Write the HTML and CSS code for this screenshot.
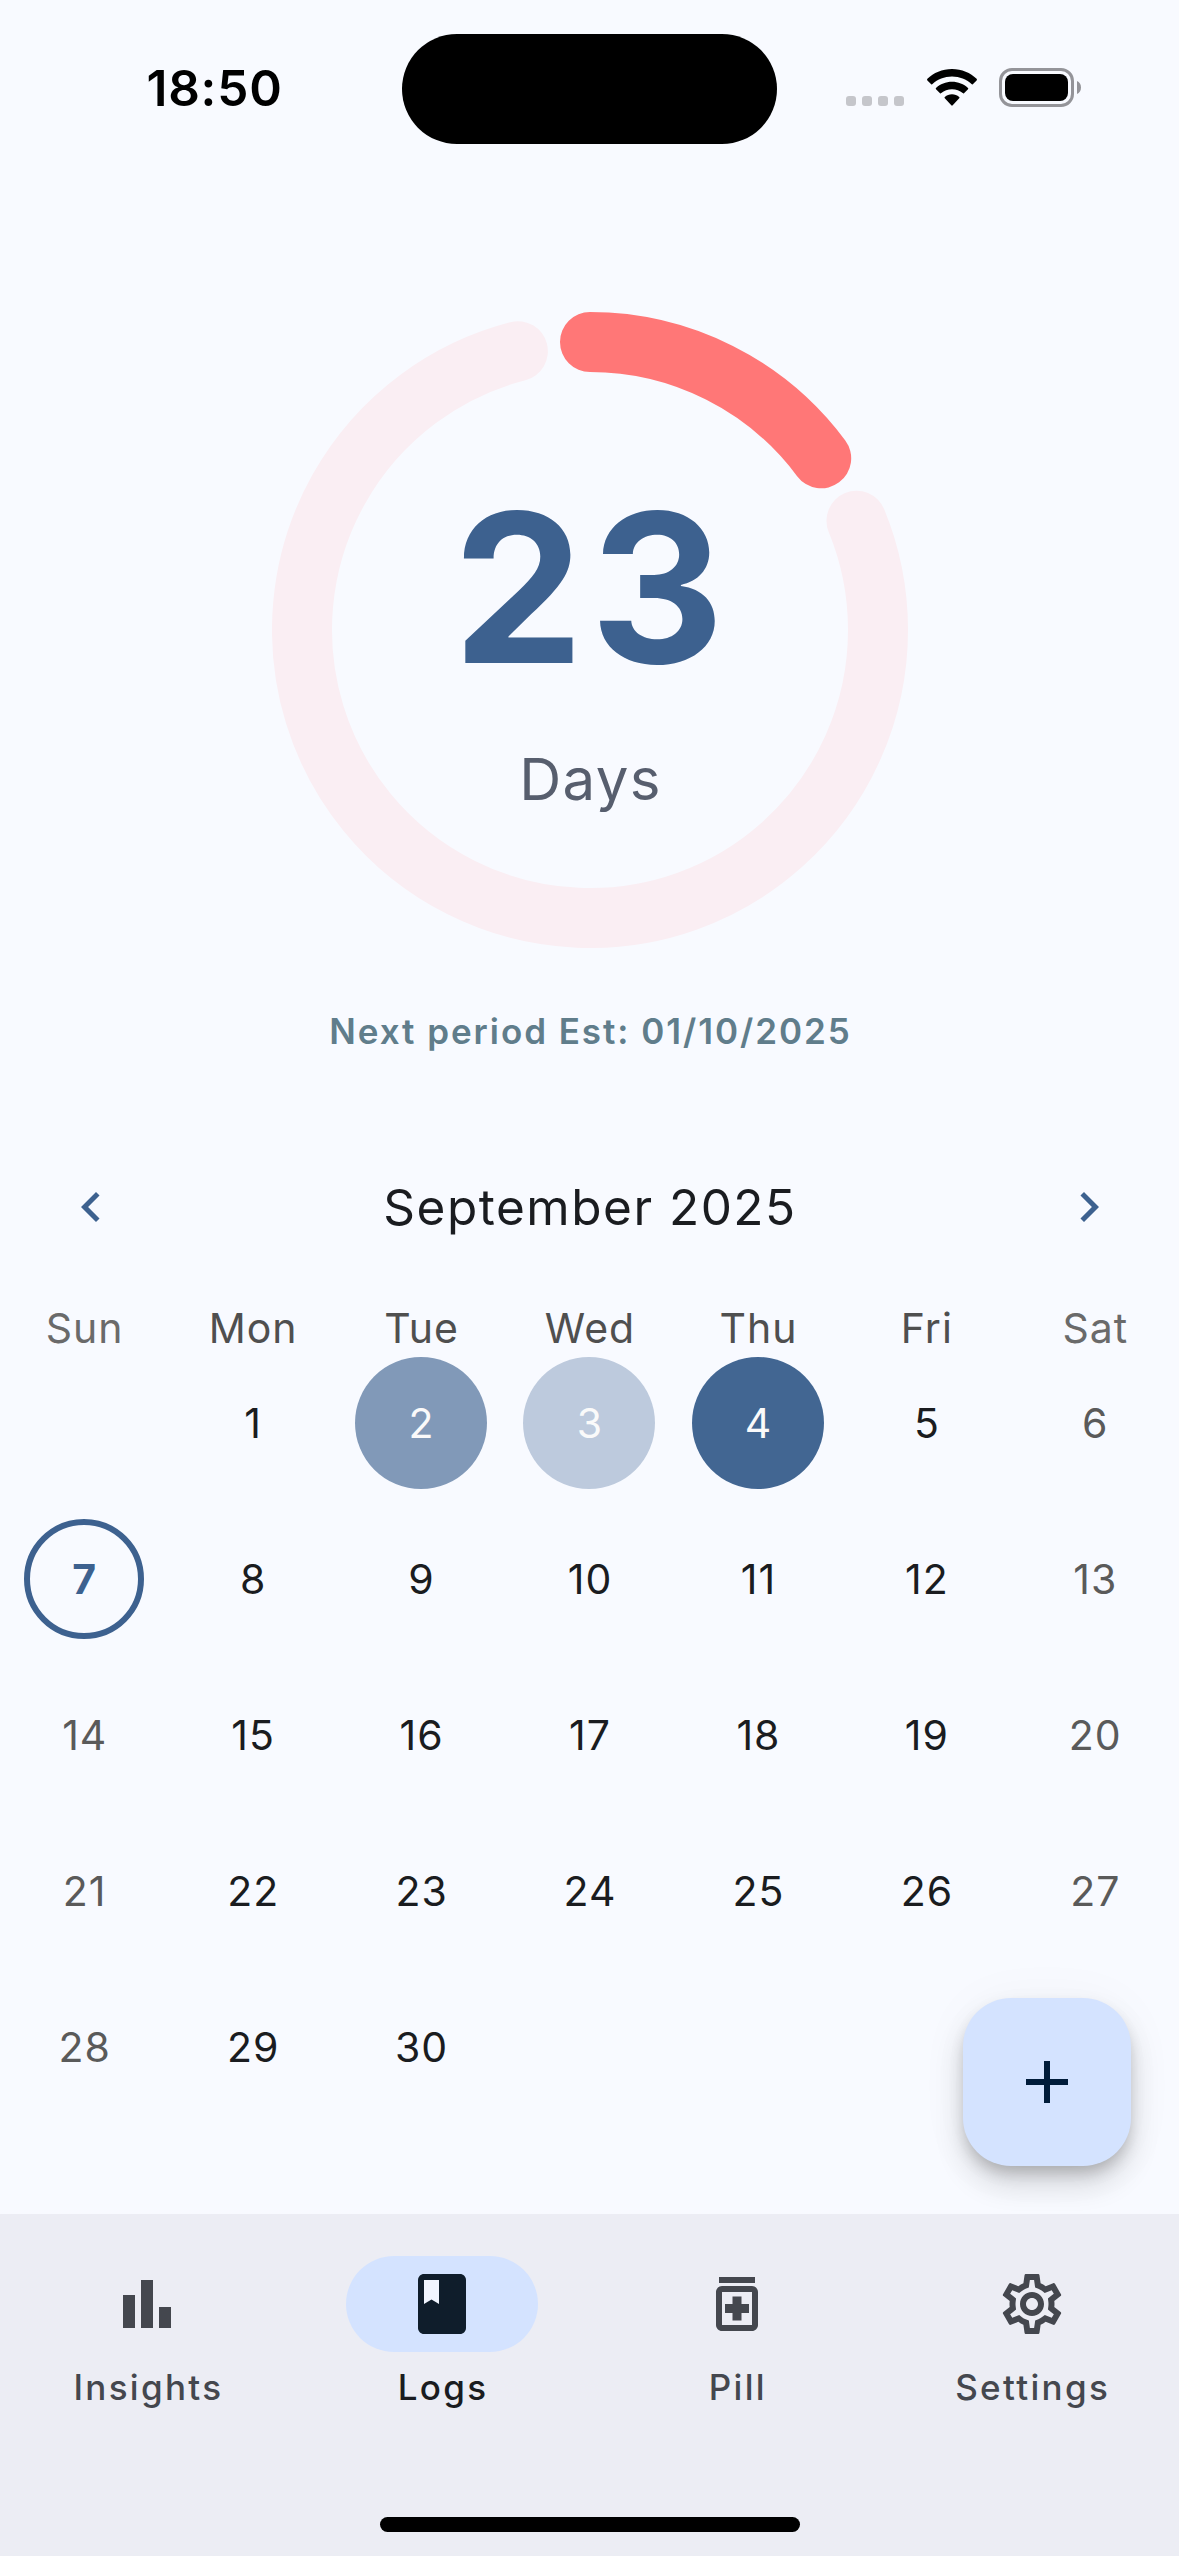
FILE: index.html
```
<!DOCTYPE html>
<html lang="en">
<head>
<meta charset="utf-8">
<title>Cycle log</title>
<link rel="stylesheet" href="styles.css">
</head>
<body>
<div class="screen">
  <header class="status">
    <div class="status-time"><span>18:50</span></div>
    <div class="island"></div>
    <div class="status-icons">
      <svg class="signal" viewBox="0 0 58 10"><rect width="10" height="10" rx="3"/><rect x="16" width="10" height="10" rx="3"/><rect x="32" width="10" height="10" rx="3"/><rect x="48" width="10" height="10" rx="3"/></svg>
      <svg class="wifi" viewBox="0 0 50 37"><path d="M25 0C34.800 0 43.500 3.800 49.600 9.800Q50.300 10.600 49.600 11.400L45.800 15.200Q45.200 15.700 44.500 15.100C39.400 10.400 32.600 7.600 25 7.600S10.600 10.400 5.500 15.100Q4.800 15.700 4.200 15.200L.4 11.400Q-.3 10.600 .4 9.800C6.500 3.800 15.200 0 25 0Z"/><path d="M25 12.700C31.200 12.700 36.800 15 41 18.900Q41.600 19.500 41 20.200L37 24.200Q36.400 24.700 35.700 24.100C32.900 21.700 29.100 20.200 25 20.200S17.100 21.700 14.300 24.100Q13.600 24.700 13 24.200L9 20.200Q8.400 19.500 9 18.900C13.200 15 18.800 12.700 25 12.700Z"/><path d="M25 25.200C27.700 25.200 30.200 26.200 32.200 27.900Q32.900 28.600 32.200 29.300L25.700 36.300Q25 37 24.300 36.300L17.800 29.300Q17.100 28.600 17.800 27.900C19.800 26.200 22.300 25.200 25 25.200Z"/></svg>
      <svg class="battery" viewBox="0 0 82 39"><rect x="1.500" y="1.500" width="72" height="36" rx="11.500" fill="none" stroke="#949499" stroke-width="3"/><rect x="6" y="6" width="63" height="27" rx="8"/><path d="M78 13C80.500 14 82 16.500 82 19.500S80.500 25 78 26Z" fill="#949499"/></svg>
    </div>
  </header>

  <main class="content">
    <section class="cycle">
      <svg class="ring" viewBox="-318 -318 636 636">
        <path class="ring-rest" d="M266.460 -109.280A288 288 0 1 1 -72.110 -278.830"/>
        <path class="ring-period" d="M0 -288A288 288 0 0 1 231.200 -171.710"/>
      </svg>
      <div class="cycle-text">
        <div class="cycle-count">23</div>
        <div class="cycle-unit">Days</div>
      </div>
    </section>
    <p class="estimate">Next period Est: 01/10/2025</p>

    <section class="calendar">
      <div class="month-bar">
        <svg class="chevron" viewBox="0 0 24 24"><path d="M15.410 7.410 14 6l-6 6 6 6 1.410-1.410L10.830 12z"/></svg>
        <h1 class="month">September 2025</h1>
        <svg class="chevron" viewBox="0 0 24 24"><path d="M8.590 16.590 10 18l6-6-6-6-1.410 1.410L13.170 12z"/></svg>
      </div>
      <div class="weekdays">
        <span class="off">Sun</span><span>Mon</span><span>Tue</span><span>Wed</span><span>Thu</span><span>Fri</span><span class="off">Sat</span>
      </div>
      <div class="days">
        <span></span><span>1</span><span><b class="mark medium">2</b></span><span><b class="mark light">3</b></span><span><b class="mark heavy">4</b></span><span>5</span><span class="off">6</span>
        <span><b class="today">7</b></span><span>8</span><span>9</span><span>10</span><span>11</span><span>12</span><span class="off">13</span>
        <span class="off">14</span><span>15</span><span>16</span><span>17</span><span>18</span><span>19</span><span class="off">20</span>
        <span class="off">21</span><span>22</span><span>23</span><span>24</span><span>25</span><span>26</span><span class="off">27</span>
        <span class="off">28</span><span>29</span><span>30</span>
      </div>
    </section>
    <button class="fab" aria-label="Add"><svg class="icon" viewBox="0 0 24 24"><path d="M19 13h-6v6h-2v-6H5v-2h6V5h2v6h6z"/></svg></button>
  </main>

  <footer class="nav">
    <nav class="tabs">
      <a class="tab"><span class="tab-icon"><svg class="icon" viewBox="0 0 24 24"><path d="M4 9h4v11H4zm12 4h4v7h-4zm-6-9h4v16h-4z"/></svg></span><span class="tab-label">Insights</span></a>
      <a class="tab active"><span class="tab-icon"><svg class="icon" viewBox="0 0 24 24"><path d="M18 2H6c-1.100 0-2 .9-2 2v16c0 1.100.9 2 2 2h12c1.100 0 2-.9 2-2V4c0-1.100-.9-2-2-2z"/><path d="M6 4h5v8l-2.500-1.500L6 12V4z" fill="#f1f5ff"/></svg></span><span class="tab-label">Logs</span></a>
      <a class="tab"><span class="tab-icon"><svg class="icon" viewBox="0 0 24 24"><path d="M6 3h12v2H6zm11 3H7c-1.100 0-2 .9-2 2v11c0 1.100.9 2 2 2h10c1.100 0 2-.9 2-2V8c0-1.100-.9-2-2-2zm0 13H7V8h10v11zM10.500 17.500h3V15H16v-3h-2.500V9.500h-3V12H8v3h2.500z"/></svg></span><span class="tab-label">Pill</span></a>
      <a class="tab"><span class="tab-icon"><svg class="icon" viewBox="0 0 24 24"><path d="M19.430 12.980c.04-.32.07-.64.07-.98 0-.34-.03-.66-.07-.98l2.110-1.650c.19-.15.24-.42.12-.64l-2-3.460c-.09-.16-.26-.25-.44-.25-.06 0-.12.01-.17.03l-2.490 1c-.52-.4-1.080-.73-1.690-.98l-.38-2.650C14.460 2.180 14.250 2 14 2h-4c-.25 0-.46.18-.49.42l-.38 2.650c-.61.25-1.170.59-1.690.98l-2.490-1c-.06-.02-.12-.03-.18-.03-.17 0-.34.09-.43.25l-2 3.460c-.13.22-.07.49.12.64l2.110 1.650c-.04.32-.07.65-.07.98 0 .33.03.66.07.98l-2.110 1.650c-.19.15-.24.42-.12.64l2 3.460c.09.16.26.25.44.25.06 0 .12-.01.17-.03l2.490-1c.52.4 1.080.73 1.690.98l.38 2.650c.03.24.24.42.49.42h4c.25 0 .46-.18.49-.42l.38-2.650c.61-.25 1.170-.59 1.690-.98l2.490 1c.06.02.12.03.18.03.17 0 .34-.09.43-.25l2-3.460c.12-.22.07-.49-.12-.64l-2.110-1.650zm-1.980-1.710c.04.31.05.52.05.73 0 .21-.02.43-.05.73l-.14 1.130.89.7 1.080.84-.7 1.210-1.270-.51-1.040-.42-.9.68c-.43.32-.84.56-1.250.73l-1.060.43-.16 1.130-.2 1.350h-1.400l-.19-1.350-.16-1.130-1.060-.43c-.43-.18-.83-.41-1.230-.71l-.91-.7-1.060.43-1.270.51-.7-1.210 1.080-.84.89-.7-.14-1.130c-.03-.31-.05-.54-.05-.74s.02-.43.05-.73l.14-1.130-.89-.7-1.080-.84.7-1.210 1.270.51 1.040.42.9-.68c.43-.32.84-.56 1.250-.73l1.060-.43.16-1.130.2-1.350h1.390l.19 1.350.16 1.130 1.060.43c.43.18.83.41 1.230.71l.91.7 1.060-.43 1.270-.51.7 1.210-1.070.85-.89.7.14 1.130zM12 8c-2.210 0-4 1.790-4 4s1.790 4 4 4 4-1.790 4-4-1.790-4-4-4zm0 6c-1.100 0-2-.9-2-2s.9-2 2-2 2 .9 2 2-.9 2-2 2z"/></svg></span><span class="tab-label">Settings</span></a>
    </nav>
    <div class="home-bar"></div>
  </footer>
</div>
</body>
</html>
```
FILE: styles.css
```
* { box-sizing: border-box; }

body {
  margin: 0;
  background: #f8faff;
  color: #1a1c20;
  font-family: Inter, "Liberation Sans", sans-serif;
}

.screen {
  width: 1179px;
  height: 2556px;
  display: flex;
  flex-direction: column;
}

.status {
  display: grid;
  grid-template-columns: 402px 375px 402px;
  align-items: center;
  height: 178px;
}
.status-time {
  padding: 0 0 2px 27px;
  text-align: center;
  font-size: 49.5px;
  font-weight: 600;
  line-height: 60px;
  letter-spacing: .8px;
  color: #000;
}
.island { height: 110px; border-radius: 55px; background: #000; }
.status-icons { display: flex; align-items: flex-end; padding: 0 0 3px 69px; }
.signal { width: 58px; height: 10px; fill: #c5c6cb; margin-bottom: 1px; }
.wifi { width: 50px; height: 37px; margin: 0 22.5px 1px 22.5px; }
.battery { width: 82px; height: 39px; }

.content {
  position: relative;
  height: 2036px;
  display: flex;
  flex-direction: column;
  align-items: center;
}

.cycle {
  display: grid;
  place-items: center;
  width: 636px;
  height: 636px;
  margin-top: 134px;
}
.cycle > * { grid-area: 1 / 1; }
.ring { width: 636px; height: 636px; }
.ring path { fill: none; stroke-width: 60; stroke-linecap: round; }
.ring-rest { stroke: #faeef3; }
.ring-period { stroke: #ff7777; }
.cycle-text { text-align: center; height: 636px; }
.cycle-count {
  margin-top: 149px;
  font-size: 208px;
  font-weight: 700;
  line-height: 252px;
  letter-spacing: 6px;
  text-indent: 4px;
  color: #3d618f;
}
.cycle-unit {
  margin-top: 30px;
  font-size: 58.2px;
  line-height: 72px;
  letter-spacing: 1.3px;
  text-indent: 2px;
  color: #575e6e;
}

.estimate {
  margin: 61px 0 0;
  font-size: 35px;
  font-weight: 620;
  line-height: 44px;
  letter-spacing: 1.95px;
  text-indent: 2px;
  color: #607d8b;
}

.calendar { width: 1179px; margin-top: 117px; }
.month-bar {
  display: flex;
  align-items: center;
  justify-content: space-between;
  height: 74px;
  padding: 0 60.5px;
}
.chevron { width: 60px; height: 60px; fill: #3d618f; }
.month {
  margin: 0;
  font-size: 49.5px;
  font-weight: 400;
  line-height: 60px;
  letter-spacing: 1.5px;
  text-indent: 1px;
}
.weekdays, .days {
  display: grid;
  grid-template-columns: repeat(7, 1fr);
  font-size: 41px;
  letter-spacing: 1px;
  text-indent: 1px;
}
.weekdays {
  margin-top: 60px;
  line-height: 48px;
  text-align: center;
  color: #4f4f4f;
}
.weekdays .off { color: #6a6a6a; }
.days { grid-auto-rows: 156px; margin-top: -7px; }
.days span { display: flex; align-items: center; justify-content: center; }
.days .off { color: #5a5a5a; }
.mark, .today {
  display: flex;
  align-items: center;
  justify-content: center;
  border-radius: 50%;
}
.mark { width: 132px; height: 132px; font-weight: 400; color: #fafafa; }
.medium { background: #8199b8; }
.light { background: #bdcadd; }
.heavy { background: #426692; }
.today {
  width: 120px;
  height: 120px;
  border: 6px solid #3d618f;
  font-weight: 700;
  color: #3d618f;
}

.fab {
  position: absolute;
  right: 48px;
  bottom: 48px;
  display: grid;
  place-items: center;
  width: 168px;
  height: 168px;
  padding: 0;
  border: 0;
  border-radius: 48px;
  background: #d4e3ff;
  color: #001c3a;
  box-shadow: 0 9px 15px -3px rgba(0, 0, 0, .2), 0 18px 30px rgba(0, 0, 0, .14), 0 3px 54px rgba(0, 0, 0, .04);
}
.icon { width: 72px; height: 72px; fill: currentColor; display: block; }

.nav {
  position: relative;
  height: 342px;
  background: #ecedf4;
  display: flex;
  flex-direction: column;
  align-items: center;
  justify-content: space-between;
  padding: 42px 0 24px;
}
.tabs { display: grid; grid-template-columns: repeat(4, 1fr); width: 100%; }
.tab {
  display: flex;
  flex-direction: column;
  align-items: center;
  gap: 11px;
  color: #44474e;
}
.tab-icon {
  display: grid;
  place-items: center;
  width: 192px;
  height: 96px;
  border-radius: 48px;
}
.active .tab-icon { background: #d4e3ff; color: #0f1d2b; }
.active .tab-label { color: #1a1c20; }
.tab-label {
  font-size: 35px;
  font-weight: 480;
  line-height: 48px;
  letter-spacing: 2.3px;
  text-indent: 2px;
}
.home-bar { width: 420px; height: 15px; border-radius: 8px; background: #000; }
```
